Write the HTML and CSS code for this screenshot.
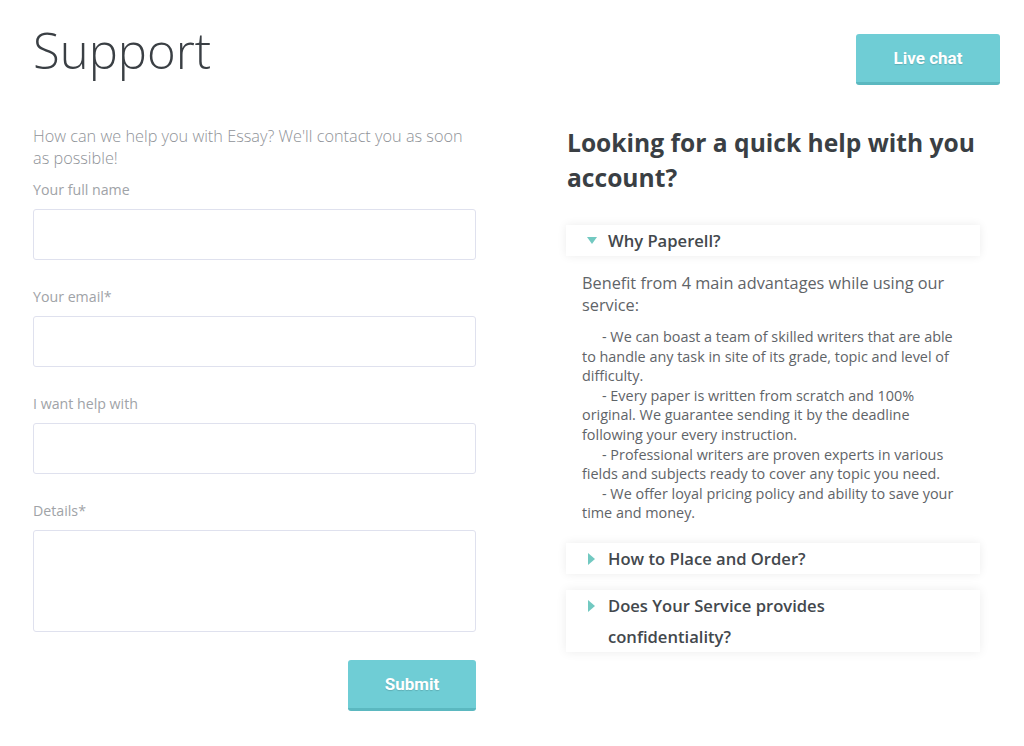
FILE: index.html
```html
<!DOCTYPE html>
<html lang="en">
<head>
    <meta charset="UTF-8" />
    <meta name="viewport" content="width=device-width, initial-scale=1.0" />
    <title>Support</title>
    <link rel="stylesheet" href="styles.css">
</head>
<body>
<div class="page">
    <header class="page-header">
        <h1>Support</h1>
        <button class="btn btn-chat">Live chat</button>
    </header>

    <div class="columns">
        <form class="support-form">
            <p class="lead">How can we help you with Essay? We'll contact you as soon as possible!</p>

            <label class="field-label" for="name">Your full name</label>
            <input class="field" id="name" type="text">

            <label class="field-label" for="email">Your email*</label>
            <input class="field" id="email" type="email">

            <label class="field-label" for="topic">I want help with</label>
            <input class="field" id="topic" type="text">

            <label class="field-label" for="details">Details*</label>
            <textarea class="field field-area" id="details"></textarea>

            <div class="form-footer">
                <button class="btn btn-submit" type="button">Submit</button>
            </div>
        </form>

        <section class="faq">
            <h2>Looking for a quick help with you account?</h2>

            <div class="faq-item open">
                <div class="faq-title"><span class="arrow"></span>Why Paperell?</div>
                <div class="faq-body">
                    <p class="faq-intro">Benefit from 4 main advantages while using our service:</p>
                    <p class="faq-point">- We can boast a team of skilled writers that are able to handle any task in site of its grade, topic and level of difficulty.</p>
                    <p class="faq-point">- Every paper is written from scratch and 100% original. We guarantee sending it by the deadline following your every instruction.</p>
                    <p class="faq-point">- Professional writers are proven experts in various fields and subjects ready to cover any topic you need.</p>
                    <p class="faq-point">- We offer loyal pricing policy and ability to save your time and money.</p>
                </div>
            </div>

            <div class="faq-item">
                <div class="faq-title"><span class="arrow"></span>How to Place and Order?</div>
            </div>

            <div class="faq-item">
                <div class="faq-title"><span class="arrow"></span>Does Your Service provides confidentiality?</div>
            </div>
        </section>
    </div>
</div>
</body>
</html>
```

FILE: styles.css
```css
:root {
    --heading: #3a3f44;
    --text: #555b61;
    --muted: #8f9398;
    --label: #a0a3a7;
    --accent: #6fcdd5;
    --accent-dark: #5bb8c0;
    --arrow: #72c9c1;
    --border: #dfe1ee;
    --font: 'Open Sans', sans-serif;
}

*, *::before, *::after { box-sizing: border-box; margin: 0; }

body {
    font-family: var(--font);
    background: #fff;
    color: var(--text);
}

.page { padding: 20px 24px 0 33px; }

.page-header {
    display: flex; justify-content: space-between; align-items: flex-start;
}
h1 {
    font-size: 49px; font-weight: 300; line-height: 60px;
    color: var(--heading);
}

.btn {
    font-family: Roboto, sans-serif; font-weight: 700; font-size: 17px;
    color: #fff; background-color: var(--accent);
    border: 0; border-bottom: 3px solid var(--accent-dark);
    border-radius: 3px; height: 51px; cursor: pointer;
    text-shadow: 0 1px 1px rgba(0, 0, 0, 0.15);
}
.btn-chat { width: 144px; margin-top: 14px; }
.btn-submit { width: 128px; }

.columns {
    display: flex; gap: 90px; margin-top: 40px;
}

.support-form { width: 443px; display: flex; flex-direction: column; }
.lead {
    font-size: 16.3px; font-weight: 300; line-height: 22px;
    color: var(--muted); margin-bottom: 11px; padding-right: 8px;
}
.field-label {
    font-size: 14.2px; line-height: 20px; color: var(--label);
    margin-bottom: 9px;
}
.field {
    width: 100%; height: 51px; margin-bottom: 27px;
    border: 1px solid var(--border); border-radius: 3px;
    font-family: var(--font); font-size: 14px; padding: 0 12px;
    background: #fff;
}
.field-area { height: 102px; resize: none; margin-bottom: 28px; padding: 12px; }
.form-footer { display: flex; justify-content: flex-end; }

.faq { width: 414px; }
.faq h2 {
    font-size: 24.6px; font-weight: 700; line-height: 35px;
    color: var(--heading); margin-bottom: 30px; padding-left: 1px;
}
.faq-item { margin-bottom: 16px; }
.faq-title {
    position: relative;
    background: #fff; box-shadow: 0 0 10px rgba(0, 0, 0, 0.08);
    font-size: 16.6px; font-weight: 600; line-height: 31px;
    color: #43484d; padding: 0 60px 0 42px;
}
.arrow {
    position: absolute; left: 22px; top: 10px;
    width: 0; height: 0;
    border-top: 6px solid transparent; border-bottom: 6px solid transparent;
    border-left: 7px solid var(--arrow);
}
.faq-item.open .arrow {
    left: 21px; top: 12px;
    border-left: 5.5px solid transparent; border-right: 5.5px solid transparent;
    border-top: 7px solid var(--arrow); border-bottom: 0;
}
.faq-body { padding: 16px 20px 4px 16px; }
.faq-intro {
    font-size: 16.3px; line-height: 22px; color: #5f6468; margin-bottom: 11px;
}
.faq-point {
    font-size: 14.4px; line-height: 19.6px; color: #5f6468; text-indent: 20px;
}
```
